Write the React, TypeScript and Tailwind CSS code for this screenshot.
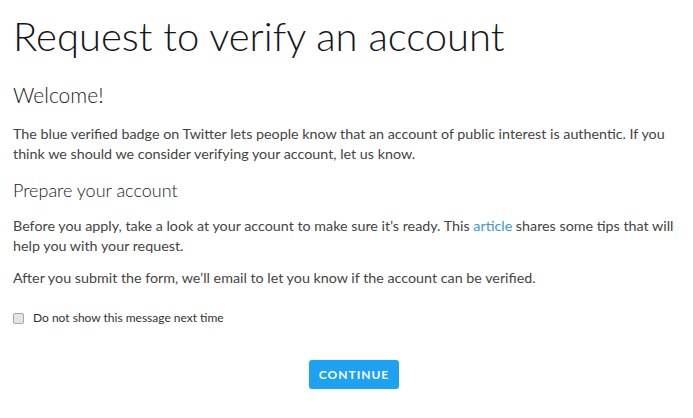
import React, { useState } from 'react';

const App: React.FC = () => {
  const [hide, setHide] = useState(false);

  return (
    <div className="w-[693px] h-[418px] bg-white px-[13px] pt-[12px] font-['Lato','Noto_Sans',sans-serif] text-[#333]">
      <h1 className="text-[40px] leading-[48px] font-light text-[#14171a]">Request to verify an account</h1>
      <h2 className="mt-[21px] text-[21px] leading-[28px] font-light text-[#222]">Welcome!</h2>
      <p className="mt-[15px] text-[14.3px] leading-[20px] text-[#444]">
        The blue verified badge on Twitter lets people know that an account of public interest is authentic. If you think we should we consider verifying your account, let us know.
      </p>
      <h3 className="mt-[14px] text-[18px] leading-[24px] font-light text-[#222]">Prepare your account</h3>
      <p className="mt-[14px] text-[14.3px] leading-[20px] text-[#444]">
        Before you apply, take a look at your account to make sure it’s ready. This{' '}
        <a href="#" className="text-[#3b94d9]">article</a> shares some tips that will help you with your request.
      </p>
      <p className="mt-[12px] text-[14.3px] leading-[20px] text-[#444]">
        After you submit the form, we’ll email to let you know if the account can be verified.
      </p>
      <label className="mt-[22px] flex items-center h-[16px] text-[12px] leading-[16px] text-[#333]">
        <input
          type="checkbox"
          checked={hide}
          onChange={e => setHide(e.target.checked)}
          className="appearance-none w-[11px] h-[11px] mr-[9px] rounded-[2px] border border-[#a6a6a6] bg-[#e4e4e4] checked:bg-[#1da1f2] checked:border-[#1da1f2]"
        />
        Do not show this message next time
      </label>
      <div className="mt-[34px] pl-[15px] flex justify-center">
        <button className="w-[90px] h-[29px] rounded-[3px] bg-[#1da1f2] text-white text-[12px] font-bold tracking-[1px]">
          CONTINUE
        </button>
      </div>
    </div>
  );
};

export default App;
